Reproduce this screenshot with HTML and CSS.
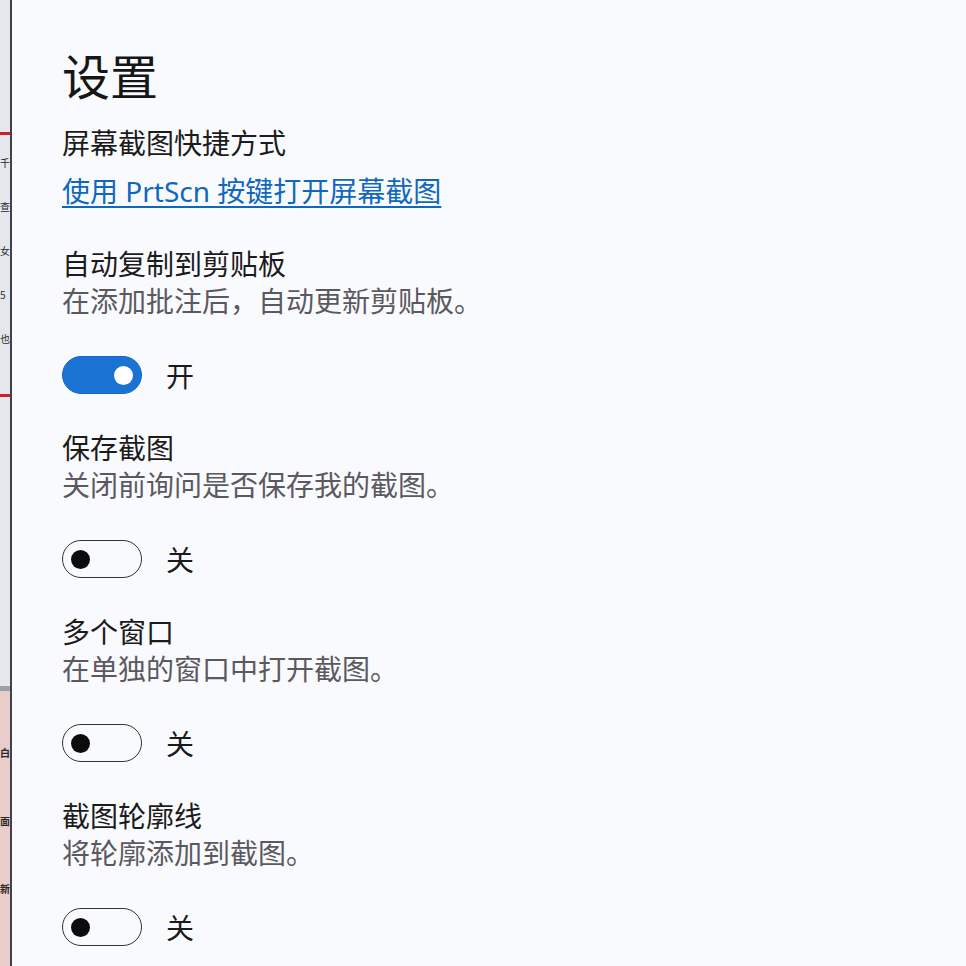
FILE: index.html
```html
<!DOCTYPE html>
<html lang="zh-CN">
<head>
<meta charset="utf-8">
<title>设置</title>
<link rel="stylesheet" href="styles.css">
</head>
<body>
<div class="screen">
  <aside class="backdrop" aria-hidden="true">
    <div class="rule rule-top"></div>
    <div class="peek">千</div>
    <div class="peek">查</div>
    <div class="peek">女</div>
    <div class="peek">5</div>
    <div class="peek">也</div>
    <div class="rule rule-bottom"></div>
    <div class="peek peek-low">白</div>
    <div class="peek peek-low">面</div>
    <div class="peek peek-low">新</div>
  </aside>

  <main class="panel">
    <h1 class="title">设置</h1>

    <h2 class="label shortcut">屏幕截图快捷方式</h2>
    <a class="link" href="#">使用 PrtScn 按键打开屏幕截图</a>

    <section class="setting">
      <h2 class="label">自动复制到剪贴板</h2>
      <p class="desc">在添加批注后，自动更新剪贴板。</p>
      <div class="switch-row">
        <span class="switch on"><span class="knob"></span></span>
        <span class="state">开</span>
      </div>
    </section>

    <section class="setting">
      <h2 class="label">保存截图</h2>
      <p class="desc">关闭前询问是否保存我的截图。</p>
      <div class="switch-row">
        <span class="switch"><span class="knob"></span></span>
        <span class="state">关</span>
      </div>
    </section>

    <section class="setting">
      <h2 class="label">多个窗口</h2>
      <p class="desc">在单独的窗口中打开截图。</p>
      <div class="switch-row">
        <span class="switch"><span class="knob"></span></span>
        <span class="state">关</span>
      </div>
    </section>

    <section class="setting">
      <h2 class="label">截图轮廓线</h2>
      <p class="desc">将轮廓添加到截图。</p>
      <div class="switch-row">
        <span class="switch"><span class="knob"></span></span>
        <span class="state">关</span>
      </div>
    </section>
  </main>
</div>
</body>
</html>
```

FILE: styles.css
```css
* {
  box-sizing: border-box;
}

html,
body {
  margin: 0;
  padding: 0;
  background: #f9fafd;
}

body {
  font-family: "Noto Sans", "Noto Sans CJK SC", sans-serif;
  color: #1b1b1b;
}

.screen {
  display: flex;
  width: 966px;
  height: 966px;
  overflow: hidden;
}

/* window behind the settings pane, only a sliver is visible */
.backdrop {
  flex: 0 0 12px;
  border-right: 2px solid #41414d;
  overflow: hidden;
  background: linear-gradient(
    #e4e7eb 0,
    #e4e7eb 686px,
    #9aa2a9 686px,
    #9aa2a9 691px,
    #e8cdca 691px
  );
  display: flex;
  flex-direction: column;
}

.rule {
  height: 3px;
  background: #d11f2e;
}

.rule-top {
  margin-top: 132px;
  margin-bottom: 6px;
}

.rule-bottom {
  margin-top: 33px;
  margin-bottom: 322px;
}

.peek {
  height: 44px;
  line-height: 44px;
  font-family: "Noto Sans CJK SC", sans-serif;
  font-size: 10px;
  color: #2a2a2a;
  text-align: left;
}

.peek-low {
  height: 68px;
  line-height: 68px;
  font-weight: 700;
}

/* settings pane */
.panel {
  flex: 1;
  padding: 42px 0 0 50px;
  font-size: 28px;
  line-height: 37px;
}

.title {
  margin: 0;
  font-size: 48px;
  line-height: 64px;
  font-weight: 400;
  font-family: "Noto Sans CJK SC", sans-serif;
  color: #161616;
}

.label {
  margin: 0;
  font-size: 28px;
  line-height: 37px;
  font-weight: 400;
  font-family: "Noto Sans CJK SC", sans-serif;
  color: #1b1b1b;
}

.shortcut {
  margin-top: 18px;
}

.link {
  display: inline-block;
  margin-top: 12px;
  color: #0f67c0;
  text-decoration: underline;
  text-decoration-thickness: 1.5px;
  text-underline-offset: 4px;
}

.setting {
  margin-top: 35px;
}

.desc {
  margin: 0;
  font-family: "Noto Sans CJK SC", sans-serif;
  color: #5b5960;
}

.switch-row {
  margin-top: 37px;
  display: flex;
  align-items: center;
  gap: 24px;
  height: 38px;
}

.switch {
  display: flex;
  align-items: center;
  width: 80px;
  height: 38px;
  padding: 0 8px;
  border: 1.5px solid #333338;
  border-radius: 19px;
  background: transparent;
}

.switch .knob {
  width: 19px;
  height: 19px;
  border-radius: 50%;
  background: #0c0c0c;
}

.switch.on {
  justify-content: flex-end;
  background: #1a72d2;
  border-color: #1768c4;
}

.switch.on .knob {
  background: #ffffff;
}

.state {
  font-family: "Noto Sans CJK SC", sans-serif;
  color: #1b1b1b;
}
```
